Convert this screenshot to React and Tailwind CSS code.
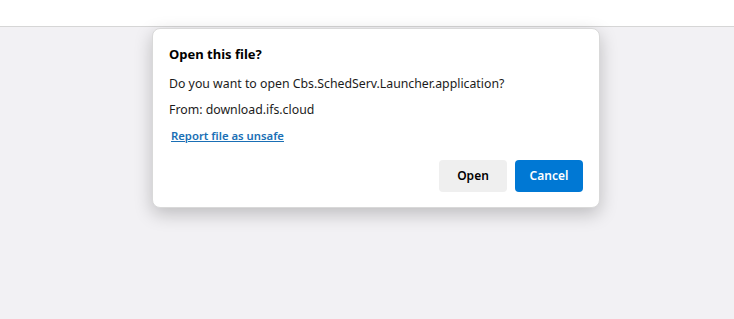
import React from 'react';

export default function App() {
  return (
    <div
      className="w-[734px] h-[319px] flex flex-col bg-[#f2f1f4] overflow-hidden"
      style={{ fontFamily: '"Noto Sans", "Open Sans", sans-serif' }}
    >
      <div className="h-[27px] bg-white border-b border-[#d6d6d6] shrink-0" />
      <div className="pl-[152px] pt-[1px]">
        <div className="w-[448px] h-[180px] bg-white rounded-[8px] border border-[#d9d9d9] shadow-[0_6px_18px_rgba(0,0,0,0.22)] px-[16px] pt-[16px] flex flex-col">
          <h1 className="text-[13px] font-bold text-black leading-[18px]">Open this file?</h1>
          <p className="mt-[12px] text-[12.3px] text-[#1b1b1b] leading-[18px]">
            Do you want to open Cbs.SchedServ.Launcher.application?
          </p>
          <p className="mt-[8px] text-[12.3px] text-[#1b1b1b] leading-[18px]">From: download.ifs.cloud</p>
          <a className="mt-[8px] ml-[2px] text-[11.3px] font-semibold text-[#1a6fb5] underline leading-[18px] self-start">
            Report file as unsafe
          </a>
          <div className="mt-[15px] flex justify-end gap-[8px]">
            <button className="w-[68px] h-[32px] rounded-[4px] bg-[#efefef] text-[12px] font-semibold text-black">
              Open
            </button>
            <button className="w-[68px] h-[32px] rounded-[4px] bg-[#0078d4] text-[12px] font-semibold text-white">
              Cancel
            </button>
          </div>
        </div>
      </div>
    </div>
  );
}
